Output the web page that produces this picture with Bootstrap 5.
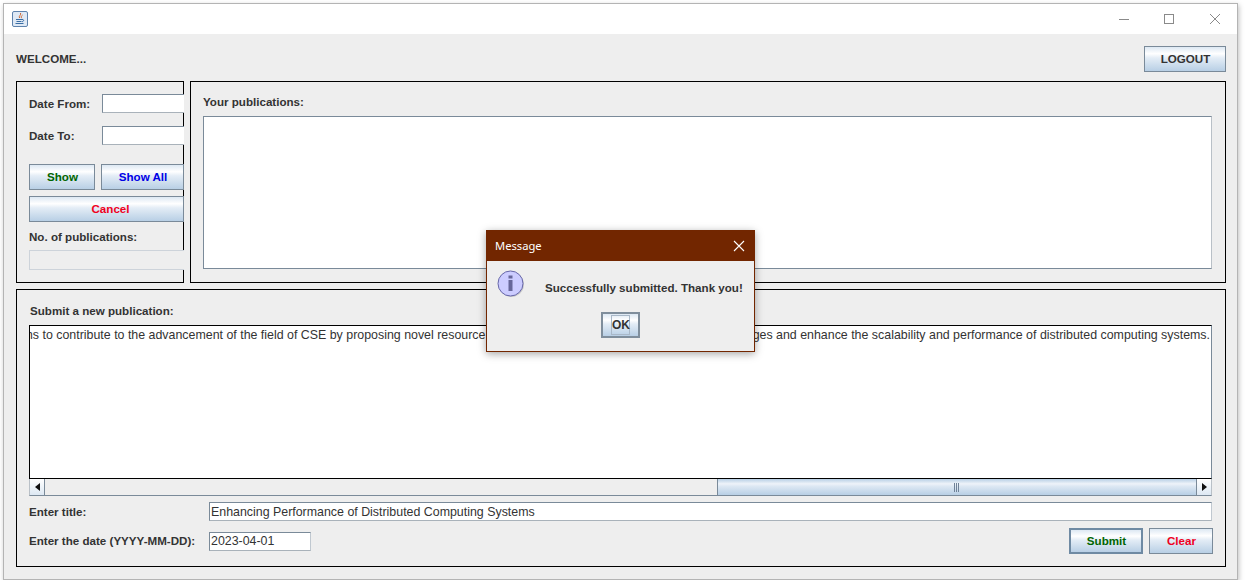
<!DOCTYPE html>
<html lang="en">
<head>
    <meta charset="UTF-8">
    <meta name="viewport" content="width=device-width, initial-scale=1.0">
    <title>Publications</title>
    <link href="https://cdn.jsdelivr.net/npm/bootstrap@5.3.0/dist/css/bootstrap.min.css" rel="stylesheet">
    <style>
        body { background: #fff; font: 12.4px/14px "Liberation Sans", Arial, sans-serif; color: #333; overflow: hidden; }
        .app-window { position: relative; width: 1235px; height: 577px; margin: 3px 0 0 3px; background: #eee; border: 1px solid #b4b4b4; box-shadow: 1px 2px 5px rgba(0,0,0,.25); }
        .app-title { height: 30px; background: #fff; }
        .win-max { margin-left: 33px; }
        .win-close { margin-left: 34px; margin-right: 16px; }
        .app-body { padding: 0 11px 0 12px; }
        .app-head { height: 47px; padding-top: 12px; }
        .lbl { font-weight: 700; font-size: 11.6px; color: #333; white-space: nowrap; }
        .lbl-welcome { padding-top: 6px; }
        .swing-btn { padding: 0 0 0 1px; font: 700 11.6px/14px "Liberation Sans", Arial, sans-serif; border: 1px solid #7a8a99; border-radius: 0; height: 26px; color: #333;
            background: linear-gradient(#dde8f3 0, #fff 28%, #e4edf6 45%, #b8cfe5 100%); }
        .swing-btn.strong { border-width: 2px; border-color: #6f8aa3; }
        .logout-btn { width: 82px; }
        .swing-field { padding: 0 1px; height: 19px; font: 12.4px/14px "Liberation Sans", Arial, sans-serif; color: #333; border: 1px solid #7a8a99; border-right-color: #c0c8d0; border-bottom-color: #a9b2ba; border-radius: 0; background: #fff; }
        .box { border: 1px solid #000; }
        .top-row { gap: 6px; }
        .box-left { width: 168px; height: 202px; padding: 12px 0 0 12px; flex: none; }
        .box-left .to-edge { margin-right: -1px; }
        .box-left .swing-field { min-width: 0; width: 10px; border-right: 0; }
        .lbl-date { width: 73px; flex: none; padding-top: 1px; }
        .date-to { margin-top: 13px; }
        .btn-row-a { margin-top: 19px; gap: 6px; }
        .btn-row-b { margin-top: 6px; }
        .btn-cancel { padding-left: 8px; }
        .no-pub { margin-top: 8px; }
        .text-show, .text-submit { color: #006400; }
        .text-all { color: #0000e6; }
        .text-cancel { color: #f0001e; }
        .box-right { height: 202px; padding: 13px 13px 0 12px; }
        .view-area { height: 153px; background: #fff; border: 1px solid #7a8a99; border-right-color: #b9c0c7; margin-top: 7px; }
        .w-show { width: 66px; }
        .w-all { flex: 1; }
        .info-field { height: 20px; border: 1px solid #cdd3da; border-right: 0; background: #eee; margin-top: 6px; }
        .box-bottom { height: 278px; margin-top: 6px; padding: 14px 13px 0 12px; }
        .lbl-sub { padding-left: 1px; }
        .txt-area { height: 154px; margin-top: 7px; background: #fff; border: 1px solid #000; border-right-color: #7a8a99; padding-right: 1px; overflow: hidden; white-space: nowrap; line-height: 18px; }
        .sbar { height: 17px; border-bottom: 1px solid #7a8a99; border-left: 1px solid #b9c0c7; border-right: 1px solid #b9c0c7; background: #eee; }
        .sbar-arrow { width: 15px; flex: none; border-right: 1px solid #7a8a99; background: linear-gradient(#fff, #dde8f3); }
        .sbar-arrow.end { border-right: 0; border-left: 1px solid #7a8a99; }
        .sbar-track { flex: 1; }
        .sbar-thumb { width: 479px; flex: none; border-left: 1px solid #7a8a99; background: linear-gradient(#b8cfe5 0, #eef3f9 30%, #dde8f3 45%, #b8cfe5 100%); }
        .lbl-form { width: 180px; flex: none; }
        .row-title { margin-top: 6px; }
        .row-date { margin-top: 7px; height: 26px; }
        .w-date { width: 102px; }
        .form-btns { gap: 6px; }
        .w-submit { width: 74px; }
        .w-clear { width: 64px; margin-right: -1px; }
        .app-dialog { position: absolute; left: 482px; top: 226px; width: 269px; height: 122px; background: #eee; border: 1px solid #722600; box-shadow: 0 2px 8px rgba(0,0,0,.35); }
        .dialog-title { height: 30px; padding: 0 9px 2px 8px; background: #722600; color: #fff; font: 11.2px "Noto Sans", "Open Sans", sans-serif; }
        .dialog-close { margin-top: 2px; }
        .dialog-msg { padding: 9px 10px 0 10px; height: 51px; }
        .dialog-icon { flex: none; }
        .dialog-text { margin-left: 20px; margin-top: 11px; }
        .ok-btn { width: 39px; padding: 0; border-width: 2px; border-color: #7f8e9c; font-size: 12px; }
        .ok-btn span { display: inline-block; width: 19px; padding: 1px 0; border: 1px solid #a9b8c8; line-height: 16px; font-weight: 700; }
    </style>
</head>
<body>
<div class="app-window">
    <div class="app-title d-flex align-items-center justify-content-between">
        <svg class="ms-2" width="16" height="16" viewBox="0 0 16 16">
            <rect x=".5" y=".5" width="15" height="15" rx="1.5" fill="#dfe9f5" stroke="#5f83ad"/>
            <path d="M8.500 2c1.200 1.800-2.200 2.800-1 5M10.500 4c-1.200 1-1.700 1.800-.8 3.200" fill="none" stroke="#d0632a"/>
            <path d="M4 8.500h6M4.500 10.500h5M3.500 12.500h8M10 8.500c2.200-.5 2.200 2 0 2.200" fill="none" stroke="#3a6ea5"/>
        </svg>
        <div class="d-flex align-items-center">
            <svg width="12" height="12" viewBox="0 0 12 12"><path d="M1 6.500h10" stroke="#8a8a8a"/></svg>
            <svg class="win-max" width="12" height="12" viewBox="0 0 12 12"><rect x="1.500" y="1.500" width="9" height="9" fill="none" stroke="#8a8a8a"/></svg>
            <svg class="win-close" width="12" height="12" viewBox="0 0 12 12"><path d="M1 1l10 10M11 1L1 11" stroke="#8a8a8a"/></svg>
        </div>
    </div>
    <div class="app-body">
        <div class="app-head d-flex justify-content-between">
            <div class="lbl lbl-welcome">WELCOME...</div>
            <button class="btn swing-btn logout-btn" type="button">LOGOUT</button>
        </div>
        <div class="d-flex top-row">
            <div class="box box-left">
                <div class="d-flex align-items-center to-edge">
                    <label class="lbl lbl-date">Date From:</label>
                    <input class="form-control swing-field flex-fill" type="text">
                </div>
                <div class="d-flex align-items-center to-edge date-to">
                    <label class="lbl lbl-date">Date To:</label>
                    <input class="form-control swing-field flex-fill" type="text">
                </div>
                <div class="d-flex to-edge btn-row-a">
                    <button class="btn swing-btn w-show text-show" type="button">Show</button>
                    <button class="btn swing-btn w-all text-all" type="button">Show All</button>
                </div>
                <div class="to-edge btn-row-b">
                    <button class="btn swing-btn btn-cancel w-100 text-cancel" type="button">Cancel</button>
                </div>
                <div class="lbl no-pub">No. of publications:</div>
                <div class="info-field to-edge"></div>
            </div>
            <div class="box box-right flex-fill">
                <div class="lbl">Your publications:</div>
                <div class="view-area"></div>
            </div>
        </div>
        <div class="box box-bottom">
            <div class="lbl lbl-sub">Submit a new publication:</div>
            <div class="txt-area d-flex justify-content-end">
                <span>This research aims to contribute to the advancement of the field of CSE by proposing novel resource allocation techniques that address these challenges and enhance the scalability and performance of distributed computing systems.</span>
            </div>
            <div class="sbar d-flex">
                <div class="sbar-arrow d-flex align-items-center justify-content-center">
                    <svg width="5" height="8" viewBox="0 0 5 8"><path d="M5 0v8L0 4z" fill="#111"/></svg>
                </div>
                <div class="sbar-track"></div>
                <div class="sbar-thumb d-flex align-items-center justify-content-center">
                    <svg width="6" height="9" viewBox="0 0 6 9"><path d="M.5 0v9M2.500 0v9M4.500 0v9" stroke="#6f8298"/></svg>
                </div>
                <div class="sbar-arrow end d-flex align-items-center justify-content-center">
                    <svg width="5" height="8" viewBox="0 0 5 8"><path d="M0 0v8l5-4z" fill="#111"/></svg>
                </div>
            </div>
            <div class="d-flex align-items-center row-title">
                <label class="lbl lbl-form">Enter title:</label>
                <input class="form-control swing-field flex-fill" type="text" value="Enhancing Performance of Distributed Computing Systems">
            </div>
            <div class="d-flex align-items-center row-date">
                <label class="lbl lbl-form">Enter the date (YYYY-MM-DD):</label>
                <input class="form-control swing-field w-date" type="text" value="2023-04-01">
                <div class="ms-auto d-flex form-btns">
                    <button class="btn swing-btn strong w-submit text-submit" type="button">Submit</button>
                    <button class="btn swing-btn w-clear text-cancel" type="button">Clear</button>
                </div>
            </div>
        </div>
    </div>

    <div class="app-dialog">
        <div class="dialog-title d-flex align-items-center justify-content-between">
            <span>Message</span>
            <svg class="dialog-close" width="12" height="12" viewBox="0 0 12 12"><path d="M1 1l10 10M11 1L1 11" stroke="#fff" stroke-width="1.100"/></svg>
        </div>
        <div class="dialog-msg d-flex">
            <svg class="dialog-icon" width="28" height="28" viewBox="0 0 28 28">
                <circle cx="14.500" cy="14.500" r="12.500" fill="#000" opacity=".15"/>
                <circle cx="13.500" cy="13.500" r="12.500" fill="#ccccff" stroke="#6666a8"/>
                <rect x="11.500" y="10" width="4" height="11" fill="#666699"/>
                <rect x="11.500" y="5.500" width="4" height="3" fill="#666699"/>
            </svg>
            <div class="lbl dialog-text">Successfully submitted. Thank you!</div>
        </div>
        <div class="text-center">
            <button class="btn swing-btn ok-btn" type="button"><span>OK</span></button>
        </div>
    </div>
</div>
</body>
</html>
